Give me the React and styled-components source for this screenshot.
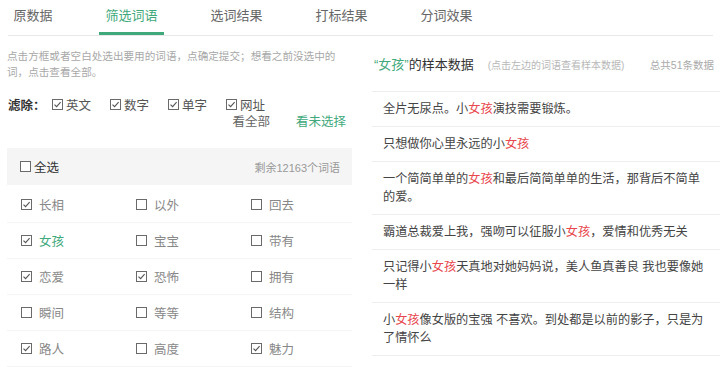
import React from "react";
import styled, { createGlobalStyle } from "styled-components";

const Global = createGlobalStyle`
  html, body { margin: 0; padding: 0; background: #fff; }
  body {
    font-family: "Liberation Sans", "Noto Sans CJK SC", sans-serif;
    width: 720px; height: 367px; overflow: hidden;
  }
  * { box-sizing: border-box; }
`;

const GREEN = "#3fa97c";
const RED = "#e8474c";

const Page = styled.div`
  width: 720px;
  padding-left: 7px;
`;

const TabBar = styled.div`
  display: flex;
  gap: 40px;
  width: 705px;
  margin-left: 1px;
  height: 36px;
  border-bottom: 1px solid #e8e8e8;
`;

const Tab = styled.div`
  height: 35px;
  padding: 7px 6.5px 0;
  font-size: 13px;
  line-height: 18px;
  color: ${(p) => (p.$active ? GREEN : "#666")};
  border-bottom: 3px solid ${(p) => (p.$active ? GREEN : "transparent")};
  margin-left: ${(p) => (p.$first ? "-1px" : "0")};
`;

const Body = styled.div`
  display: flex;
  gap: 20px;
`;

const Left = styled.div`
  width: 345px;
  flex: none;
`;

const Desc = styled.div`
  padding: 12px 10px 0 0;
  font-size: 10.6px;
  line-height: 16px;
  color: #a8a8a8;
`;

const FilterRow = styled.div`
  display: flex;
  align-items: center;
  margin-top: 15px;
  height: 18px;
  padding-left: 1px;
`;

const FilterLabel = styled.span`
  font-size: 12.5px;
  font-weight: bold;
  color: #333;
  width: 44px;
`;

const FilterItem = styled.label`
  display: flex;
  align-items: center;
  gap: 3px;
  width: 58px;
  font-size: 12.5px;
  color: #555;
`;

const Links = styled.div`
  display: flex;
  justify-content: flex-end;
  gap: 26px;
  padding-right: 6px;
  height: 18px;
  line-height: 18px;
  font-size: 12.5px;
`;

const LinkText = styled.span`
  color: ${(p) => (p.$green ? GREEN : "#666")};
`;

const ListHead = styled.div`
  margin-top: 17px;
  height: 37px;
  background: #f5f5f5;
  display: flex;
  align-items: center;
  justify-content: space-between;
  padding: 0 12px 0 13px;
`;

const AllLabel = styled.label`
  display: flex;
  align-items: center;
  gap: 3px;
  font-size: 12.5px;
  color: #333;
`;

const Remain = styled.span`
  font-size: 11px;
  color: #999;
`;

const Grid = styled.div`
  margin-top: 2px;
  display: grid;
  grid-template-columns: repeat(3, 115px);
`;

const Cell = styled.label`
  height: 36px;
  display: flex;
  align-items: center;
  gap: 7px;
  padding-left: 14px;
  font-size: 12.5px;
  color: ${(p) => (p.$hl ? GREEN : "#888")};
  border-bottom: 1px solid #f5f5f5;
`;

const Box = styled.span`
  width: 11px;
  height: 11px;
  flex: none;
  border: 1px solid #6a6a6a;
  display: inline-flex;
  align-items: center;
  justify-content: center;
  background: #fff;
`;

const Check = ({ on }) => (
  <Box>
    {on && (
      <svg width="9" height="9" viewBox="0 0 9 9">
        <path d="M1.5 4.6 L3.6 6.7 L7.6 2.2" fill="none" stroke="#555" strokeWidth="1.1" />
      </svg>
    )}
  </Box>
);

const Right = styled.div`
  width: 348px;
  flex: none;
`;

const RHead = styled.div`
  display: flex;
  align-items: center;
  height: 56px;
  padding: 2px 6px 0 2px;
  border-bottom: 1px solid #eeeeee;
`;

const Title = styled.span`
  font-size: 13px;
  color: #333;
  line-height: 18px;
`;

const Green = styled.span`
  color: ${GREEN};
`;

const Note = styled.span`
  margin-left: 14px;
  font-size: 10px;
  color: #b8b8b8;
`;

const Total = styled.span`
  margin-left: auto;
  font-size: 10.5px;
  color: #aaa;
`;

const Item = styled.div`
  padding: 8px 10px 8px 11px;
  font-size: 12.2px;
  line-height: 18px;
  color: #444;
  border-bottom: 1px solid #eeeeee;
`;

const Red = styled.span`
  color: ${RED};
`;

const tabs = ["原数据", "筛选词语", "选词结果", "打标结果", "分词效果"];

const words = [
  ["长相", true], ["以外", false], ["回去", false],
  ["女孩", true, true], ["宝宝", false], ["带有", false],
  ["恋爱", true], ["恐怖", true], ["拥有", false],
  ["瞬间", false], ["等等", false], ["结构", false],
  ["路人", true], ["高度", false], ["魅力", true],
];

const samples = [
  ["全片无尿点。小", "女孩", "演技需要锻炼。"],
  ["只想做你心里永远的小", "女孩", ""],
  ["一个简简单单的", "女孩", "和最后简简单单的生活，那背后不简单的爱。"],
  ["霸道总裁爱上我，强吻可以征服小", "女孩", "，爱情和优秀无关"],
  ["只记得小", "女孩", "天真地对她妈妈说，美人鱼真善良 我也要像她一样"],
  ["小", "女孩", "像女版的宝强 不喜欢。到处都是以前的影子，只是为了情怀么"],
];

export default function App() {
  return (
    <Page>
      <Global />
      <TabBar>
        {tabs.map((t, i) => (
          <Tab key={t} $active={i === 1} $first={i === 0}>{t}</Tab>
        ))}
      </TabBar>
      <Body>
        <Left>
          <Desc>点击方框或者空白处选出要用的词语，点确定提交；想看之前没选中的词，点击查看全部。</Desc>
          <FilterRow>
            <FilterLabel>滤除：</FilterLabel>
            {["英文", "数字", "单字", "网址"].map((f) => (
              <FilterItem key={f}><Check on />{f}</FilterItem>
            ))}
          </FilterRow>
          <Links>
            <LinkText>看全部</LinkText>
            <LinkText $green>看未选择</LinkText>
          </Links>
          <ListHead>
            <AllLabel><Check />全选</AllLabel>
            <Remain>剩余12163个词语</Remain>
          </ListHead>
          <Grid>
            {words.map(([w, on, hl]) => (
              <Cell key={w} $hl={hl}><Check on={on} />{w}</Cell>
            ))}
          </Grid>
        </Left>
        <Right>
          <RHead>
            <Title><Green>“女孩”</Green>的样本数据</Title>
            <Note>(点击左边的词语查看样本数据)</Note>
            <Total>总共51条数据</Total>
          </RHead>
          {samples.map(([a, b, c], i) => (
            <Item key={i}>{a}<Red>{b}</Red>{c}</Item>
          ))}
        </Right>
      </Body>
    </Page>
  );
}
